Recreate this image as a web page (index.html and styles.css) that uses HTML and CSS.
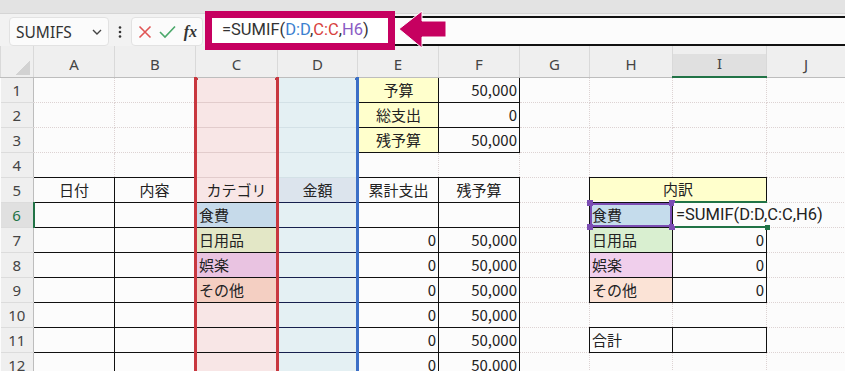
FILE: index.html
```html
<!DOCTYPE html>
<html lang="ja">
<head>
    <meta charset="UTF-8">
    <title>SUMIF 内訳</title>
    <link rel="stylesheet" href="styles.css">
</head>
<body>
    <div class="app">
        <div class="ribbon-edge"></div>

        <div class="toolbar">
            <div class="namebox">
                <span>SUMIFS</span>
                <svg width="10" height="6" viewBox="0 0 10 6"><polyline points="1,1 5,5 9,1" fill="none" stroke="#444" stroke-width="1.4"/></svg>
            </div>
            <div class="dots">
                <svg width="4" height="12" viewBox="0 0 4 12"><circle cx="2" cy="1.5" r="1.3" fill="#333"/><circle cx="2" cy="6" r="1.3" fill="#333"/><circle cx="2" cy="10.5" r="1.3" fill="#333"/></svg>
            </div>
            <div class="fx-tools">
                <svg width="14" height="14" viewBox="0 0 14 14"><path d="M1.5 1.5 L12.5 12.5 M12.5 1.5 L1.5 12.5" stroke="#e05555" stroke-width="1.6"/></svg>
                <svg width="17" height="14" viewBox="0 0 17 14"><polyline points="1,7 6,12 16,1.5" fill="none" stroke="#4aa86a" stroke-width="1.6"/></svg>
                <span class="fx">fx</span>
            </div>
            <div class="formula-input"></div>
        </div>

        <!-- annotation over the formula bar -->
        <div class="callout">=SUMIF(<span class="ref-d">D:D</span>,<span class="ref-c">C:C</span>,<span class="ref-h">H6</span>)</div>
        <svg class="arrow" width="50" height="40" viewBox="0 0 50 40">
            <polygon points="1,19 24,1 24,11 48,11 48,27 24,27 24,38" fill="#c60060" stroke="#fff" stroke-width="1"/>
        </svg>

        <table class="sheet">
            <colgroup>
                <col style="width:33px"><col style="width:81px"><col style="width:81px"><col style="width:82px"><col style="width:80px"><col style="width:81px"><col style="width:81px"><col style="width:70px"><col style="width:83px"><col style="width:94px"><col style="width:79px">
            </colgroup>
            <tr class="cols">
                <th class="corner"></th><th>A</th><th>B</th><th>C</th><th>D</th><th>E</th><th>F</th><th>G</th><th>H</th><th class="cur">I</th><th>J</th>
            </tr>
            <tr>
                <th class="rn">1</th><td></td><td></td><td class="c c-top"></td><td class="d d-top"></td><td class="k y ct">予算</td><td class="k num">50,000</td><td></td><td></td><td></td><td></td>
            </tr>
            <tr>
                <th class="rn">2</th><td></td><td></td><td class="c"></td><td class="d"></td><td class="k y ct">総支出</td><td class="k num">0</td><td></td><td></td><td></td><td></td>
            </tr>
            <tr>
                <th class="rn">3</th><td></td><td></td><td class="c"></td><td class="d"></td><td class="k y ct">残予算</td><td class="k num">50,000</td><td></td><td></td><td></td><td></td>
            </tr>
            <tr>
                <th class="rn">4</th><td></td><td></td><td class="c"></td><td class="d"></td><td></td><td></td><td></td><td></td><td></td><td></td>
            </tr>
            <tr>
                <th class="rn">5</th><td class="k ct">日付</td><td class="k ct">内容</td><td class="k c ct">カテゴリ</td><td class="k d dk hd ct">金額</td><td class="k ct">累計支出</td><td class="k ct">残予算</td><td></td><td class="k y ct" colspan="2">内訳</td><td></td>
            </tr>
            <tr>
                <th class="rn cur-row">6</th><td class="k"></td><td class="k"></td><td class="k c food">食費</td><td class="k d dk"></td><td class="k"></td><td class="k"></td><td></td>
                <td class="k food-h sel">食費<span class="h tl"></span><span class="h tr"></span><span class="h bl"></span><span class="h br"></span></td>
                <td class="k editing"><span class="edit-text">=SUMIF(D:D,C:C,H6)</span><span class="fill"></span></td><td></td>
            </tr>
            <tr>
                <th class="rn">7</th><td class="k"></td><td class="k"></td><td class="k c daily">日用品</td><td class="k d dk"></td><td class="k num">0</td><td class="k num">50,000</td><td></td><td class="k daily-h">日用品</td><td class="k num">0</td><td></td>
            </tr>
            <tr>
                <th class="rn">8</th><td class="k"></td><td class="k"></td><td class="k c fun">娯楽</td><td class="k d dk"></td><td class="k num">0</td><td class="k num">50,000</td><td></td><td class="k fun-h">娯楽</td><td class="k num">0</td><td></td>
            </tr>
            <tr>
                <th class="rn">9</th><td class="k"></td><td class="k"></td><td class="k c other">その他</td><td class="k d dk"></td><td class="k num">0</td><td class="k num">50,000</td><td></td><td class="k other-h">その他</td><td class="k num">0</td><td></td>
            </tr>
            <tr>
                <th class="rn">10</th><td class="k"></td><td class="k"></td><td class="k c"></td><td class="k d dk"></td><td class="k num">0</td><td class="k num">50,000</td><td></td><td></td><td></td><td></td>
            </tr>
            <tr>
                <th class="rn">11</th><td class="k"></td><td class="k"></td><td class="k c"></td><td class="k d dk"></td><td class="k num">0</td><td class="k num">50,000</td><td></td><td class="k">合計</td><td class="k"></td><td></td>
            </tr>
            <tr>
                <th class="rn">12</th><td class="k"></td><td class="k"></td><td class="k c"></td><td class="k d dk"></td><td class="k num">0</td><td class="k num">50,000</td><td></td><td></td><td></td><td></td>
            </tr>
        </table>
    </div>
</body>
</html>
```

FILE: styles.css
```css
body {
    margin: 0;
    width: 845px;
    height: 371px;
    overflow: hidden;
    background: #f2f2f2;
    font-family: "Noto Sans", "Noto Sans CJK JP", sans-serif;
    color: #222;
}

.app {
    position: relative;
}

.ribbon-edge {
    height: 13px;
    background: #e3e3e3;
    border-bottom: 1px solid #d5d5d5;
}

/* formula bar */
.toolbar {
    display: flex;
    align-items: flex-end;
    height: 32px;
    padding-left: 9px;
}

.namebox {
    box-sizing: border-box;
    width: 100px;
    height: 29px;
    display: flex;
    align-items: center;
    justify-content: space-between;
    padding: 0 6px 0 6px;
    background: #fbfbfb;
    border: 1px solid #e2e2e2;
    border-radius: 4px;
    font-family: "Noto Sans", sans-serif;
    font-size: 15.5px;
    color: #333;
}

.dots {
    width: 22px;
    height: 29px;
    display: flex;
    align-items: center;
    justify-content: center;
}

.fx-tools {
    box-sizing: border-box;
    width: 72px;
    height: 29px;
    display: flex;
    align-items: center;
    justify-content: space-between;
    padding: 0 5px 0 6px;
    background: #fbfbfb;
    border: 1px solid #e2e2e2;
    border-radius: 4px;
}

.fx {
    font-family: "Liberation Serif", serif;
    font-style: italic;
    font-weight: bold;
    font-size: 16px;
    color: #333;
}

.formula-input {
    flex: 1;
    box-sizing: border-box;
    height: 30px;
    margin-left: 2px;
    background: #fcfcfc;
    border-top: 2px solid #111;
    border-bottom: 2px solid #111;
}

.callout {
    position: absolute;
    left: 205px;
    top: 11px;
    box-sizing: border-box;
    width: 190px;
    height: 39px;
    padding-left: 10px;
    border: 7px solid #c60060;
    background: #fff;
    font-family: Roboto, "Noto Sans", sans-serif;
    font-size: 16.5px;
    line-height: 24px;
    color: #333;
}

.ref-d { color: #3b7fd0; }
.ref-c { color: #d8423e; }
.ref-h { color: #8a5cc4; }

.arrow {
    position: absolute;
    left: 398px;
    top: 10px;
}

/* grid */
.sheet {
    border-collapse: collapse;
    table-layout: fixed;
    width: 845px;
    background: #fcfcfc;
}

.sheet tr {
    height: 25px;
}

.sheet tr.cols {
    height: 31px;
}

.sheet td {
    padding: 0 2px;
    border: 1px dotted #ddd3d3;
    font-size: 15px;
    font-family: "Noto Sans CJK JP", "Noto Sans", sans-serif;
    line-height: 20px;
    white-space: nowrap;
    overflow: hidden;
    color: #222;
}

.cols th {
    padding: 0 0 3px;
    vertical-align: bottom;
    background: #efefef;
    border: 1px solid #d9d9d9;
    border-top: none;
    border-bottom: 1px solid #bdbdbd;
    font-family: "Noto Sans", sans-serif;
    font-weight: normal;
    font-size: 15px;
    line-height: 20px;
    color: #444;
}

.cols th.cur {
    background: linear-gradient(#efefef 8px, #e0e0e0 8px);
    border-bottom: 2px solid #217346;
}

.cols th.corner {
    background: #efefef linear-gradient(135deg, transparent 50%, #d2d2d2 50%) no-repeat right 3px bottom 2px / 15px 15px;
}

.rn {
    padding: 0;
    background: #efefef;
    border-right: 1px solid #bdbdbd;
    border-bottom: 1px solid #dcdcdc;
    font-family: "Noto Sans", sans-serif;
    font-weight: normal;
    font-size: 15px;
    line-height: 20px;
    color: #444;
}

.rn.cur-row {
    background: #e0e0e0;
    color: #217346;
    border-right: 2px solid #217346;
}

.sheet td.k {
    border: 1px solid #111;
}

.ct { text-align: center; }
.num { text-align: right; padding-right: 3px; }

.y { background: #ffffcc; }

/* highlighted criteria / sum ranges */
.sheet td.c {
    background: #f8e6e6;
    border-left: 3px solid #c8373f;
    border-right: 3px solid #c8373f;
}

.sheet td.d {
    background: #e4f0f3;
    border-right: 3px solid #3c6fc6;
}

.sheet td.c:not(.k) {
    border-top: 1px solid #e2cccc;
    border-bottom: 1px solid #e2cccc;
}

.sheet td.d:not(.k) {
    border-top: 1px solid #d3e1e6;
    border-bottom: 1px solid #d3e1e6;
}

.sheet td.dk {
    border-top-color: #16204d;
    border-bottom-color: #16204d;
}

.sheet td.hd { background: #dce4ed; }

.c-top, .d-top {
    position: relative;
}

.c-top::before, .c-top::after {
    content: "";
    position: absolute;
    top: -1px;
    width: 5px;
    height: 3px;
    background: #c8373f;
}

.c-top::before { left: -4px; }
.c-top::after { right: -4px; }

.d-top::after {
    content: "";
    position: absolute;
    top: -1px;
    right: -4px;
    width: 5px;
    height: 3px;
    background: #3c6fc6;
}

.sheet td.food { background: #c6daea; }
.sheet td.daily { background: #e3e7c6; }
.sheet td.fun { background: #e9c3e1; }
.sheet td.other { background: #f4cfc2; }

.food-h { background: #c5dcec; }
.daily-h { background: #d9efd0; }
.fun-h { background: #f0cfec; }
.other-h { background: #fbe3d6; }

/* selection on H6 */
.sheet td.sel {
    position: relative;
    overflow: visible;
    box-shadow: inset 0 0 0 2px #7b4db3;
}

.h {
    position: absolute;
    width: 6px;
    height: 6px;
    background: #7b4db3;
}

.tl { left: -3px; top: -3px; }
.tr { right: -3px; top: -3px; }
.bl { left: -3px; bottom: -3px; }
.br { right: -3px; bottom: -3px; }

/* cell in edit mode */
.sheet td.editing {
    position: relative;
    overflow: visible;
    border-top: 2px solid #217346;
    border-bottom: 2px solid #217346;
}

.edit-text {
    position: absolute;
    left: 1px;
    top: 0;
    bottom: 0;
    padding: 0 3px 0 2px;
    display: flex;
    align-items: center;
    background: #fcfcfc;
    z-index: 1;
    font-family: Roboto, "Noto Sans", sans-serif;
    font-size: 16.5px;
    color: #222;
}

.fill {
    position: absolute;
    right: -4px;
    bottom: -4px;
    width: 5px;
    height: 5px;
    background: #217346;
    z-index: 2;
}
```
